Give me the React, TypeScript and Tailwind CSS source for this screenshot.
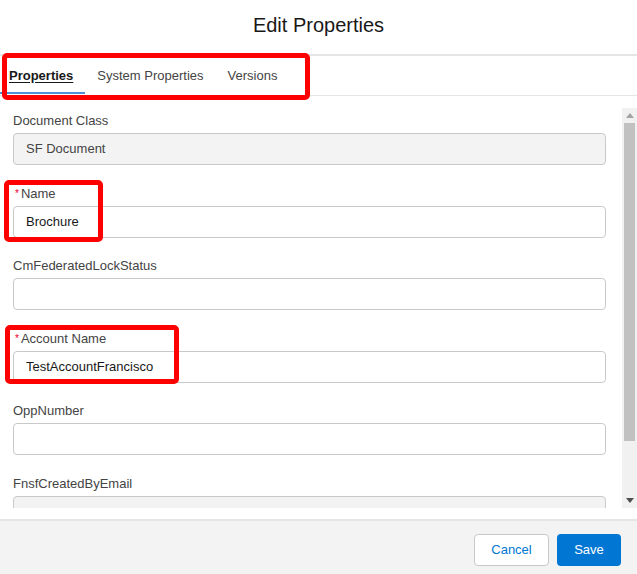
import React from 'react';

interface FieldProps {
  label: string;
  value?: string;
  required?: boolean;
  disabled?: boolean;
}

const Field: React.FC<FieldProps> = ({ label, value = '', required, disabled }) => {
  return (
    <div className="flex flex-col">
      <div className="flex items-center h-[18px] text-[13px] leading-[18px] text-[#444444]">
        {required && <span className="text-[#ea001e] text-[10px] leading-[10px] mr-[2px] pl-[2px]">*</span>}
        <span>{label}</span>
      </div>
      <div
        className={`mt-[3px] h-8 rounded-[4px] border border-[#c9c9c9] flex items-center pl-[12px] text-[13px] ${
          disabled ? 'bg-[#f3f3f3] text-[#444444]' : 'bg-white text-[#181818]'
        }`}
      >
        {value}
      </div>
    </div>
  );
};

const App: React.FC = () => {
  return (
    <div
      className="relative w-[637px] h-[574px] overflow-hidden bg-white flex flex-col"
      style={{ fontFamily: '"Liberation Sans", Arial, sans-serif' }}
    >
      {/* header */}
      <div className="h-[56px] shrink-0 border-b-2 border-[#e5e5e5] flex items-center justify-center">
        <h1 className="text-[20px] text-[#181818] -mt-[4px]">Edit Properties</h1>
      </div>

      {/* tabs */}
      <div className="h-[40px] shrink-0 border-b border-[#e5e5e5] flex items-stretch text-[13px]">
        <div className="relative pl-[9px] pr-3 flex items-center font-bold text-[#181818] underline underline-offset-2">
          Properties
          <div className="absolute left-0 right-0 bottom-[1px] h-[2px] bg-[#4f8fd8]" />
        </div>
        <div className="px-3 flex items-center text-[#444444]">System Properties</div>
        <div className="px-3 flex items-center text-[#444444]">Versions</div>
      </div>

      {/* body */}
      <div className="mt-3 h-[400px] shrink-0 flex">
        <div className="flex-1 overflow-hidden pl-[13px] pr-4 pt-1">
          <div className="flex flex-col gap-[19.5px]">
            <Field label="Document Class" value="SF Document" disabled />
            <Field label="Name" value="Brochure" required />
            <Field label="CmFederatedLockStatus" />
            <Field label="Account Name" value="TestAccountFrancisco" required />
            <Field label="OppNumber" />
            <Field label="FnsfCreatedByEmail" disabled />
          </div>
        </div>
        <div className="w-[15px] bg-[#f1f1f1] flex flex-col items-center">
          <div className="h-[15px] flex items-center justify-center">
            <svg width="8" height="5" viewBox="0 0 8 5"><path d="M4 0 L8 5 L0 5 Z" fill="#a3a3a3" /></svg>
          </div>
          <div className="w-[11px] h-[318px] bg-[#c1c1c1]" />
          <div className="flex-1" />
          <div className="h-[15px] flex items-center justify-center">
            <svg width="8" height="5" viewBox="0 0 8 5"><path d="M0 0 L8 0 L4 5 Z" fill="#505050" /></svg>
          </div>
        </div>
      </div>

      {/* footer */}
      <div className="mt-[11px] flex-1 border-t-2 border-[#e5e5e5] bg-[#f3f3f3] flex justify-end items-start pt-[13px] pr-4 gap-2">
        <button className="h-8 w-[75px] rounded-[4px] border border-[#c9c9c9] bg-white text-[13px] text-[#0176d3]">
          Cancel
        </button>
        <button className="h-8 w-[64px] rounded-[4px] bg-[#0176d3] text-[13px] text-white">Save</button>
      </div>

      {/* annotation boxes */}
      <div className="absolute left-[2px] top-[53px] w-[308px] h-[47px] border-[5px] border-[#ff0000] rounded-[5px]" />
      <div className="absolute left-[4px] top-[180px] w-[99px] h-[62px] border-[5px] border-[#ff0000] rounded-[5px]" />
      <div className="absolute left-[5px] top-[325px] w-[174px] h-[59px] border-[5px] border-[#ff0000] rounded-[5px]" />
    </div>
  );
};

export default App;
